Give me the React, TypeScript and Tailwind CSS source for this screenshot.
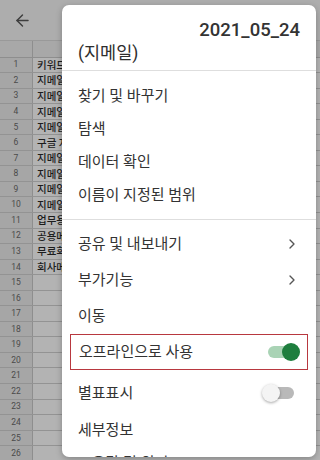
import { ArrowLeft, ChevronRight } from 'lucide-react';

const cellTexts = [
  '키워드', '지메일', '지메일', '지메일', '지메일', '구글 저', '지메일', '지메일', '지메일', '지메일',
  '업무용', '공용메', '무료회', '회사메',
];

function Toggle({ on }: { on: boolean }) {
  return (
    <div className="relative w-[38px] h-[20px] flex items-center">
      <div className={`absolute left-[6px] w-[26px] h-[12px] rounded-full ${on ? 'bg-[#a9d3b5]' : 'bg-[#b9b9b9]'}`} />
      <div
        className={`absolute w-[18px] h-[18px] rounded-full ${
          on ? 'right-[0px] bg-[#1e7e3e]' : 'left-[0px] bg-[#f4f4f4] shadow-[0_1px_3px_rgba(0,0,0,0.35)]'
        }`}
      />
    </div>
  );
}

export default function App() {
  const rows = Array.from({ length: 27 }, (_, i) => i + 1);

  return (
    <div className="relative w-[320px] h-[460px] overflow-hidden bg-[#b2b2b2] font-['Roboto','Noto_Sans_CJK_KR',sans-serif]">
      {/* Dimmed toolbar */}
      <div className="h-[41px] bg-[#adadad] flex items-center pl-[13px] border-b border-[#999]">
        <ArrowLeft className="w-[19px] h-[19px] text-[#3d3d3d]" strokeWidth={1.8} />
      </div>

      {/* Dimmed sheet grid */}
      <div className="flex flex-col">
        <div className="flex h-[16.5px] bg-[#a8a8a8] border-b border-[#8e8e8e]">
          <div className="w-[33px] border-r border-[#8e8e8e]" />
          <div className="flex-1" />
        </div>
        {rows.map(n => (
          <div key={n} className="flex h-[15.56px] border-b border-[#939393]">
            <div className="w-[33px] bg-[#a6a6a6] border-r border-[#8e8e8e] flex items-center justify-center text-[8.5px] text-[#4a4a4a]">
              {n}
            </div>
            <div className="flex-1 bg-[#b3b3b3] flex items-center pl-[4px] text-[10.5px] font-medium text-[#1c1c1c] font-['Noto_Sans_CJK_KR',sans-serif]">
              {cellTexts[n - 1] ?? ''}
            </div>
          </div>
        ))}
      </div>

      {/* Overflow menu */}
      <div className="absolute left-[62px] top-[5px] w-[254px] h-[452px] bg-white rounded-[7px] overflow-hidden shadow-[0_2px_6px_rgba(0,0,0,0.25)] text-[#333] font-['Roboto','Noto_Sans_CJK_KR',sans-serif]">
        <div className="h-[65px] flex flex-col px-[16px]">
          <div className="text-right text-[18.5px] font-medium leading-[24px] mt-[13px] pr-[0px] text-[#333]">2021_05_24</div>
          <div className="text-[17.5px] leading-[24px] -mt-[1px] text-[#2e2e2e]">(지메일)</div>
        </div>
        <div className="h-px bg-[#dedede]" />

        <div className="flex flex-col pt-[9px] pb-[7px] text-[15px]">
          {['찾기 및 바꾸기', '탐색', '데이터 확인', '이름이 지정된 범위'].map(t => (
            <div key={t} className="h-[33px] flex items-center px-[16px]">{t}</div>
          ))}
        </div>
        <div className="h-px bg-[#dedede]" />

        <div className="flex flex-col pt-[6px] text-[15px]">
          <div className="h-[36px] flex items-center justify-between pl-[16px] pr-[16px]">
            <span>공유 및 내보내기</span>
            <ChevronRight className="w-[16px] h-[16px] text-[#555]" strokeWidth={2} />
          </div>
          <div className="h-[36px] flex items-center justify-between pl-[16px] pr-[16px]">
            <span>부가기능</span>
            <ChevronRight className="w-[16px] h-[16px] text-[#555]" strokeWidth={2} />
          </div>
          <div className="h-[36px] flex items-center px-[16px]">이동</div>
          <div className="h-[36px] mx-[8px] flex items-center justify-between pl-[8px] pr-[7px] border-[1.5px] border-[#b8383f]">
            <span>오프라인으로 사용</span>
            <Toggle on />
          </div>
          <div className="h-[38px] mt-[4px] flex items-center justify-between pl-[16px] pr-[16px]">
            <span>별표표시</span>
            <Toggle on={false} />
          </div>
          <div className="h-[36px] flex items-center px-[16px]">세부정보</div>
          <div className="h-[24px] flex items-end px-[16px] leading-[18px]">도움말 및 의견</div>
        </div>
      </div>
    </div>
  );
}
